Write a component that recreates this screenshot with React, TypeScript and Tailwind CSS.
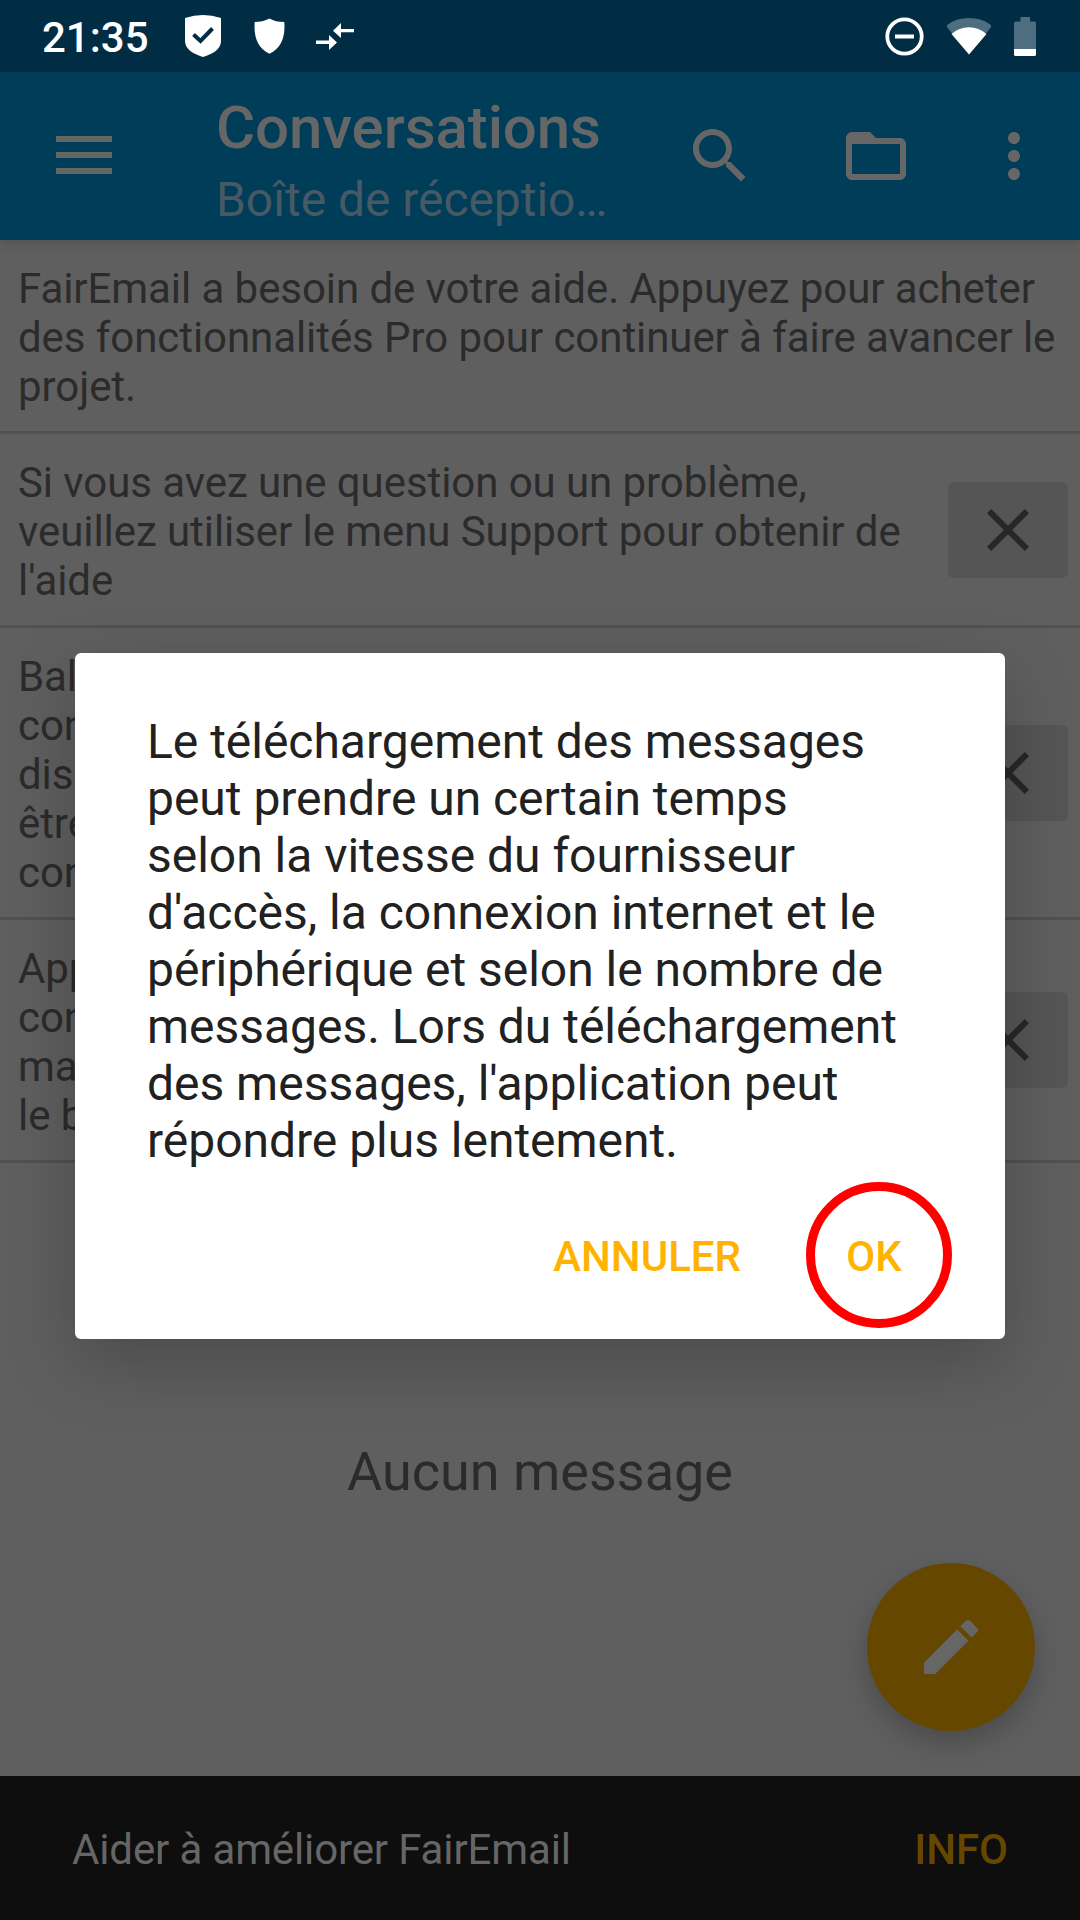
import type { ReactNode } from "react";

function Icon({ d, className }: { d: string; className: string }) {
  return (
    <svg viewBox="0 0 24 24" className={className} fill="currentColor">
      <path d={d} />
    </svg>
  );
}

function StatusBar() {
  return (
    <header className="flex h-[72px] shrink-0 items-center bg-[#002c44] text-white">
      <span className="ml-[42px] w-[107px] pt-[3px] text-[42px] leading-[69px] font-medium whitespace-nowrap">21:35</span>
      <svg className="ml-9 h-[42px] w-9" viewBox="0 0 36 42">
        <path d="M0 3Q18-3 36 3V26C36 34 28 39 18 42 8 39 0 34 0 26Z" fill="#fff" />
        <path d="M8.500 19.500L15.500 26 27.500 13.500" fill="none" stroke="#002c44" strokeWidth="4" />
      </svg>
      <svg className="ml-[33px] h-9 w-[31px]" viewBox="0 0 31 36">
        <path d="M15.500 0.500Q21.500 4 30.300 4C31.500 20 27 30 15.500 35.800 4 30-.5 20 .7 4 9.500 4 15.500.5 15.500.5Z" fill="#fff" />
      </svg>
      <svg className="ml-[31px] h-[27px] w-[38px]" viewBox="0 0 38 27">
        <path d="M0 17.500H13V12L21 19.500 13 27V21H0ZM38 6H25V0L17 7.800 25 15V9.300H38Z" fill="#fff" />
      </svg>
      <div className="mr-11 ml-auto flex items-center">
        <svg className="h-[39px] w-[39px]" viewBox="0 0 39 39">
          <circle cx="19.500" cy="19.500" r="17.200" fill="none" stroke="#fff" strokeWidth="3.800" />
          <path d="M10 17.500H29V21.500H10Z" fill="#fff" />
        </svg>
        <svg className="mr-[22px] ml-[22px] h-[38px] w-[46px]" viewBox="0 0 46 38">
          <path d="M23 37L1.200 10.500Q0 8.500 2 7.200 11 1 23 1T44 7.200Q46 8.500 44.800 10.500Z" fill="#4f6d80" />
          <path d="M23 37.500L5.500 17Q13 10.200 23 10.200T40.500 17Z" fill="#fff" />
        </svg>
        <svg className="h-[39px] w-[22px]" viewBox="0 0 22 39">
          <path d="M6.500 0H16V4.500H20.500Q22 4.500 22 6V32H0V6Q0 4.500 1.500 4.500H6.500Z" fill="#4f6d80" />
          <path d="M0 32H22V37.500Q22 39 20.500 39H1.500Q0 39 0 37.500Z" fill="#fff" />
        </svg>
      </div>
    </header>
  );
}

function Toolbar() {
  return (
    <div className="relative flex h-[168px] shrink-0 items-center bg-[#003d59] text-[#666666] shadow-[0_3px_10px_rgba(0,0,0,0.15)]">
      <div className="mt-[-2px] ml-14 flex w-14 flex-col gap-2.5">
        <div className="h-1.5 bg-current" />
        <div className="h-1.5 bg-current" />
        <div className="h-1.5 bg-current" />
      </div>
      <div className="ml-[104px] flex w-[420px] flex-col pt-2 whitespace-nowrap">
        <h1 className="text-[60px] leading-[71px] font-medium tracking-[-0.1px]">Conversations</h1>
        <p className="mt-2 text-[48px] leading-[57px] tracking-[-0.05px] text-[#475964]">Boîte de réceptio…</p>
      </div>
      <Icon className="ml-12 size-[72px]" d="M15.500 14h-.79l-.28-.27C15.410 12.590 16 11.110 16 9.500 16 5.910 13.090 3 9.500 3S3 5.910 3 9.500 5.910 16 9.500 16c1.610 0 3.090-.59 4.230-1.570l.27.280v.79l5 4.990L20.490 19l-4.990-5zm-6 0C7.010 14 5 11.990 5 9.500S7.010 5 9.500 5 14 7.010 14 9.500 11.990 14 9.500 14z" />
      <Icon className="ml-[84px] size-[72px]" d="M20 6h-8l-2-2H4c-1.100 0-1.990.9-1.990 2L2 18c0 1.100.9 2 2 2h16c1.100 0 2-.9 2-2V8c0-1.100-.9-2-2-2zm0 12H4V8h16v10z" />
      <Icon className="ml-[66px] size-[72px]" d="M12 8c1.100 0 2-.9 2-2s-.9-2-2-2-2 .9-2 2 .9 2 2 2zm0 2c-1.100 0-2 .9-2 2s.9 2 2 2 2-.9 2-2-.9-2-2-2zm0 6c-1.100 0-2 .9-2 2s.9 2 2 2 2-.9 2-2-.9-2-2-2z" />
    </div>
  );
}

function Hint({ children, closable = true }: { children: ReactNode; closable?: boolean }) {
  return (
    <section className="flex shrink-0 items-center border-b-[3px] border-[#515151] pr-3 pl-[18px]">
      <p className="flex-1 pt-6 pb-5 text-[42px] leading-[49px] tracking-[-0.07px] whitespace-nowrap">{children}</p>
      {closable && (
        <button className="flex h-24 w-[120px] items-center justify-center rounded-md bg-[#555555] text-[#262828]">
          <Icon className="size-[72px]" d="M19 6.410L17.590 5 12 10.590 6.410 5 5 6.410 10.590 12 5 17.590 6.410 19 12 13.410 17.590 19 19 17.590 13.410 12z" />
        </button>
      )}
    </section>
  );
}

function Dialog() {
  return (
    <div className="absolute top-[653px] left-[75px] flex h-[686px] w-[930px] flex-col rounded-md bg-white shadow-[0_24px_72px_rgba(0,0,0,0.22)]">
      <p className="pt-[60px] pl-[72px] text-[48px] leading-[57px] tracking-[-0.02px] whitespace-nowrap text-[#212121]">
        Le téléchargement des messages<br />
        peut prendre un certain temps<br />
        selon la vitesse du fournisseur<br />
        d'accès, la connexion internet et le<br />
        périphérique et selon le nombre de<br />
        messages. Lors du téléchargement<br />
        des messages, l'application peut<br />
        répondre plus lentement.
      </p>
      <div className="mt-[13px] mr-[53px] flex items-center justify-end text-[42px] font-medium text-[#ffb300]">
        <button className="mr-[65px] pt-[3px]">ANNULER</button>
        <div className="flex size-[146px] items-center justify-center rounded-full border-[9px] border-[#ff0000]">
          <button className="-translate-x-[5px] pt-[3px]">OK</button>
        </div>
      </div>
    </div>
  );
}

export default function App() {
  return (
    <div className="relative flex h-[1920px] w-[1080px] flex-col overflow-hidden bg-[#5f5f5f] font-['Roboto',sans-serif] text-[#2b2b2b]">
      <StatusBar />
      <Toolbar />
      <Hint closable={false}>
        FairEmail a besoin de votre aide. Appuyez pour acheter<br />
        des fonctionnalités Pro pour continuer à faire avancer le<br />
        projet.
      </Hint>
      <Hint>
        Si vous avez une question ou un problème,<br />
        veuillez utiliser le menu Support pour obtenir de<br />
        l'aide
      </Hint>
      <Hint>
        Bal<br />
        con<br />
        dis<br />
        être<br />
        con
      </Hint>
      <Hint>
        App<br />
        con<br />
        ma<br />
        le b
      </Hint>
      <main className="flex flex-1 flex-col">
        <p className="pt-[277px] text-center text-[54px] leading-[64px]">Aucun message</p>
        <button className="mt-auto mr-[45px] mb-[45px] flex size-[168px] items-center justify-center self-end rounded-full bg-[#664700] text-[#666666] shadow-[0_12px_28px_rgba(0,0,0,0.22)]">
          <Icon className="size-[72px]" d="M3 17.250V21h3.750L17.810 9.940l-3.750-3.750L3 17.250zM20.710 7.040c.39-.39.39-1.020 0-1.410l-2.340-2.340c-.39-.39-1.020-.39-1.410 0l-1.830 1.830 3.750 3.750 1.830-1.830z" />
        </button>
      </main>
      <footer className="flex h-36 shrink-0 items-center justify-between bg-[#0e0e0e] px-[72px] pt-[3px] text-[42px]">
        <span className="tracking-[-0.13px] text-[#666666]">Aider à améliorer FairEmail</span>
        <button className="font-medium text-[#664700]">INFO</button>
      </footer>
      <Dialog />
    </div>
  );
}
